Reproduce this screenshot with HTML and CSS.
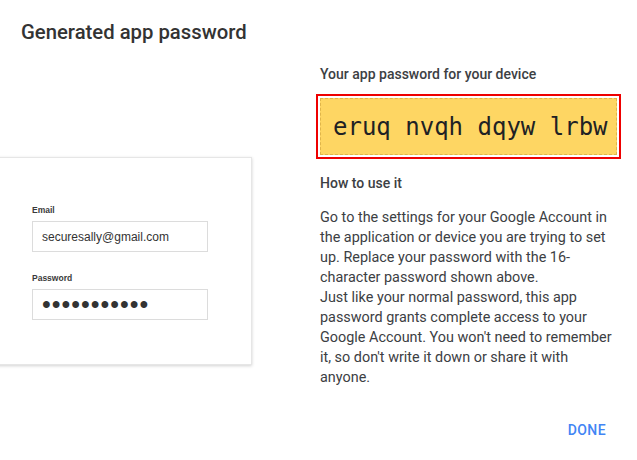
FILE: index.html
```html
<!DOCTYPE html>
<html lang="en">
<head>
    <meta charset="UTF-8">
    <meta name="viewport" content="width=device-width, initial-scale=1.0">
    <title>Generated app password</title>
    <link rel="stylesheet" href="styles.css">
</head>
<body>
    <div class="dialog">
        <h1 class="dialog-title">Generated app password</h1>

        <div class="dialog-body">
            <div class="preview">
                <div class="login-card">
                    <div class="field-label">Email</div>
                    <div class="field">securesally@gmail.com</div>
                    <div class="field-label">Password</div>
                    <div class="field field-password">&bull;&bull;&bull;&bull;&bull;&bull;&bull;&bull;&bull;&bull;&bull;</div>
                </div>
            </div>

            <div class="info">
                <div class="info-heading">Your app password for your device</div>
                <div class="app-password">eruq nvqh dqyw lrbw</div>
                <div class="info-heading how-to">How to use it</div>
                <p class="info-text">
                    Go to the settings for your Google Account in the application or device you are trying to set up. Replace your password with the 16-character password shown above.<br>
                    Just like your normal password, this app password grants complete access to your Google Account. You won't need to remember it, so don't write it down or share it with anyone.
                </p>
            </div>
        </div>

        <div class="dialog-actions">
            <button class="btn-done">DONE</button>
        </div>
    </div>
</body>
</html>
```

FILE: styles.css
```css
body {
    margin: 0;
    background: #fff;
    font-family: Roboto, "Liberation Sans", Arial, sans-serif;
    color: #3c4043;
    overflow: hidden;
}
.dialog {
    width: 637px;
    height: 460px;
    display: flex;
    flex-direction: column;
}
.dialog-title {
    margin: 0;
    padding: 20px 21px 0;
    font-size: 20.3px;
    line-height: 24px;
    font-weight: 500;
    color: #333;
}
.dialog-body {
    display: flex;
    margin-top: 20px;
}
.preview {
    width: 320px;
    flex-shrink: 0;
}
.login-card {
    width: 219px;
    margin-top: 93px;
    margin-left: -16px;
    padding: 46px 0 44px 47px;
    background: #fff;
    border: 1px solid #e6e6e6;
    box-shadow: 0 1px 3px rgba(0, 0, 0, 0.18);
    font-family: "Liberation Sans", Arial, sans-serif;
}
.field-label {
    font-size: 8.5px;
    font-weight: bold;
    color: #3a3a3a;
    line-height: 12px;
    margin-bottom: 5px;
}
.field {
    width: 165px;
    height: 29px;
    border: 1px solid #dcdcdc;
    padding: 0 0 0 9px;
    font-size: 12px;
    color: #333;
    display: flex;
    align-items: center;
    margin-bottom: 20px;
}
.field-password {
    font-size: 25px;
    line-height: 1;
    letter-spacing: 1px;
    margin-bottom: 0;
    color: #333;
}
.info {
    width: 297px;
}
.info-heading {
    font-size: 14px;
    line-height: 20px;
    font-weight: 500;
    color: #3c4043;
}
.app-password {
    margin-top: 14px;
    height: 55px;
    background: #fed663;
    border: 1px dashed #dfb54a;
    outline: 2px solid #e00;
    outline-offset: 2px;
    display: flex;
    align-items: center;
    padding-left: 12px;
    font-family: "DejaVu Sans Mono", monospace;
    font-size: 24px;
    color: #202124;
}
.how-to {
    margin-top: 18px;
}
.info-text {
    margin: 15px 0 0;
    font-size: 14.4px;
    line-height: 20px;
    color: #3c4043;
}
.dialog-actions {
    display: flex;
    justify-content: flex-end;
    padding: 0 31px 0 0;
    margin-top: auto;
    margin-bottom: 20px;
}
.btn-done {
    border: none;
    background: none;
    padding: 0;
    font-family: Roboto, sans-serif;
    font-size: 14px;
    font-weight: 500;
    line-height: 20px;
    color: #4285f4;
    letter-spacing: 0.4px;
}
```
